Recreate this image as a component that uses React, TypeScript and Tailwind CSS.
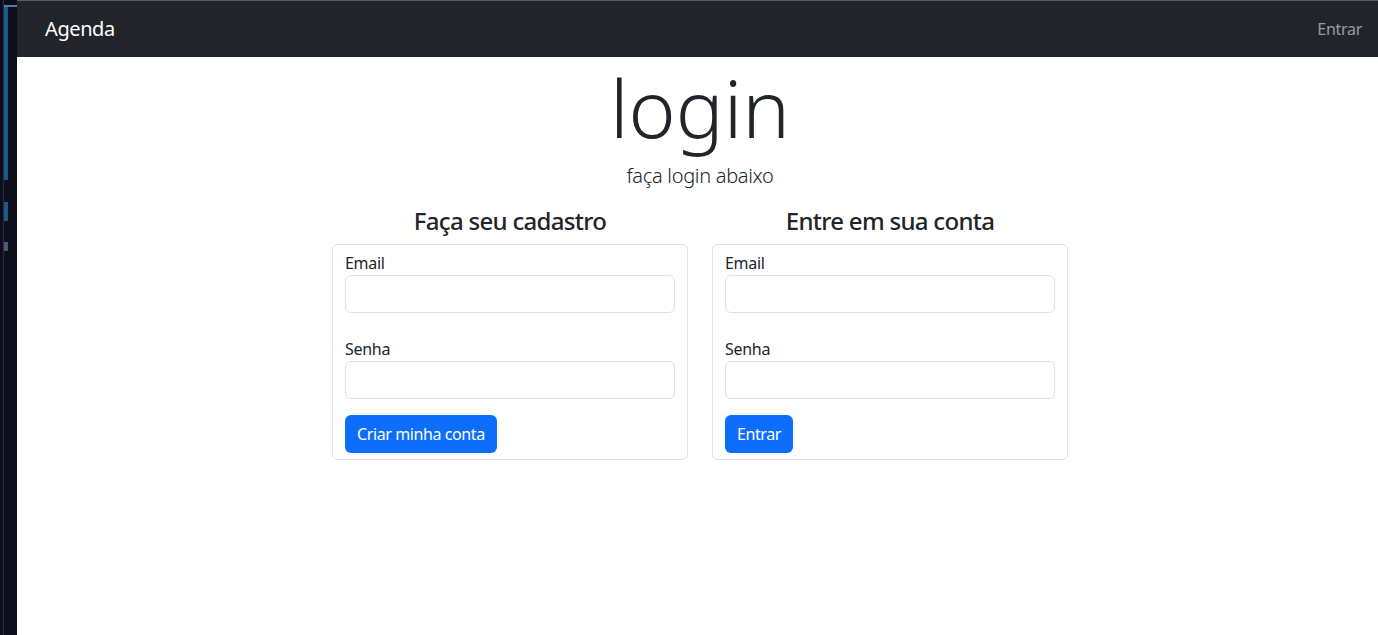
import React from "react";

const font = { fontFamily: '"Noto Sans", "Open Sans", sans-serif' };

function Card({ title, button }: { title: string; button: string }) {
  return (
    <div className="flex w-[356px] flex-col">
      <h4 className="mb-[9px] text-center text-[24px] leading-[29px] font-medium tracking-[-0.7px] text-[#212529]">{title}</h4>
      <div className="rounded-[6px] border border-[#dee2e6] px-[12px] py-[6px]">
        <label className="block text-[16px] leading-[24px] tracking-[-0.3px] text-[#212529]">Email</label>
        <div className="h-[38px] w-full rounded-[6px] border border-[#dee2e6] bg-white" />
        <label className="mt-[24px] block text-[16px] leading-[24px] tracking-[-0.3px] text-[#212529]">Senha</label>
        <div className="h-[38px] w-full rounded-[6px] border border-[#dee2e6] bg-white" />
        <button className="mt-[16px] h-[38px] rounded-[6px] bg-[#0d6efd] px-[12px] text-[16px] tracking-[-0.4px] text-white">{button}</button>
      </div>
    </div>
  );
}

export default function App() {
  return (
    <div className="flex h-[635px] w-[1378px] overflow-hidden bg-white" style={font}>
      <div className="flex h-full w-[17px] shrink-0 flex-col bg-[#0d0d1c]">
        <div className="flex h-[180px] w-full">
          <div className="ml-[3px] h-full w-[1px] bg-[#2a2d40]" />
          <div className="flex h-full flex-1 flex-col">
            <div className="mt-[5px] h-[2px] w-full bg-[#5577bb]" />
            <div className="h-full w-[4px] bg-[#1e5a85]" />
          </div>
        </div>
        <div className="flex flex-1 w-full">
          <div className="ml-[3px] h-full w-[1px] bg-[#2a2d40]" />
          <div className="flex flex-col">
            <div className="mt-[22px] h-[19px] w-[4px] bg-[#1e5a85]" />
            <div className="mt-[21px] h-[9px] w-[4px] bg-[#4a5a7a]" />
          </div>
        </div>
      </div>
      <div className="flex min-w-0 flex-1 flex-col">
        <nav className="flex h-[57px] items-center justify-between border-t border-[#5a5d62] bg-[#212529] pl-[28px] pr-[16px]">
          <span className="text-[20px] tracking-[-0.4px] text-white">Agenda</span>
          <span className="text-[16px] tracking-[-0.3px] text-[rgba(255,255,255,0.55)]">Entrar</span>
        </nav>
        <main className="flex flex-col items-center pl-[5px]">
          <h1 className="mt-[2px] text-[80px] leading-[96px] font-light text-[#212529]">login</h1>
          <p className="mt-[6px] text-[20px] leading-[30px] font-light tracking-[-0.3px] text-[#212529]">faça login abaixo</p>
          <div className="mt-[15px] flex gap-[24px]">
            <Card title="Faça seu cadastro" button="Criar minha conta" />
            <Card title="Entre em sua conta" button="Entrar" />
          </div>
        </main>
      </div>
    </div>
  );
}
